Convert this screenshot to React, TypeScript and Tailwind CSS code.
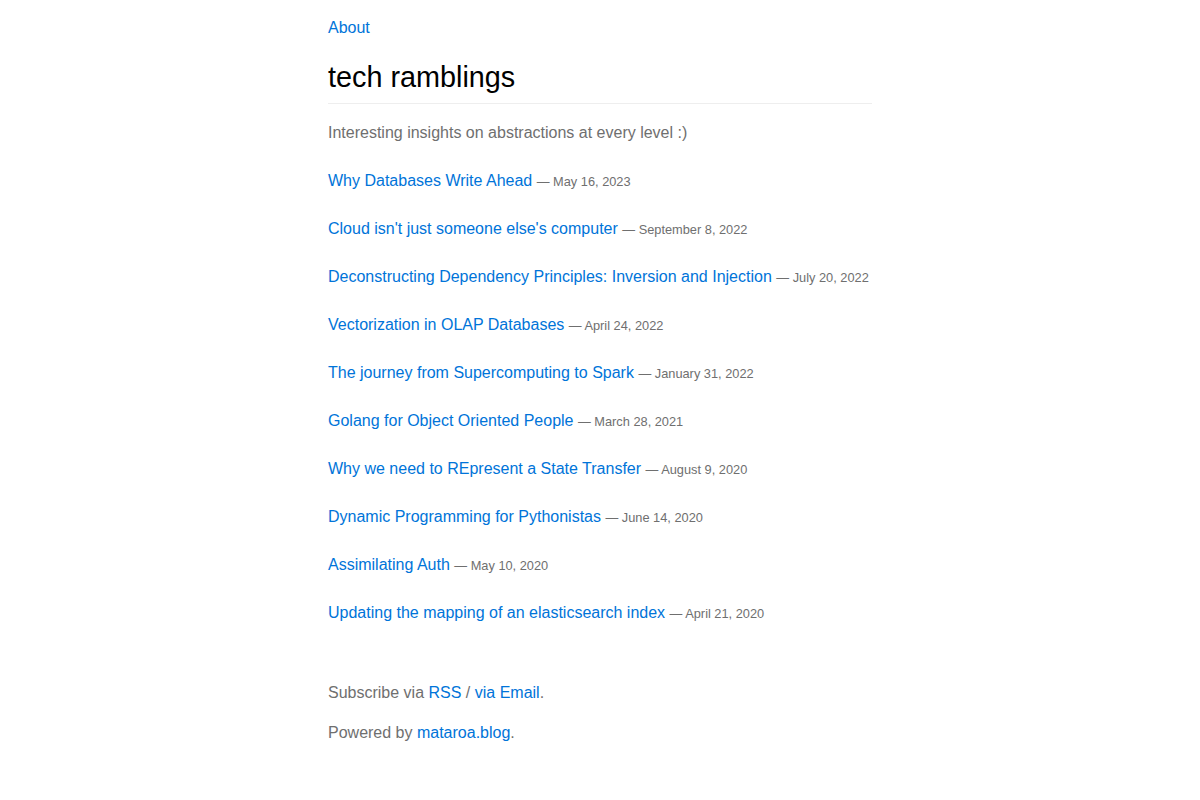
const posts: { title: string; date: string }[] = [
  { title: "Why Databases Write Ahead", date: "May 16, 2023" },
  { title: "Cloud isn't just someone else's computer", date: "September 8, 2022" },
  { title: "Deconstructing Dependency Principles: Inversion and Injection", date: "July 20, 2022" },
  { title: "Vectorization in OLAP Databases", date: "April 24, 2022" },
  { title: "The journey from Supercomputing to Spark", date: "January 31, 2022" },
  { title: "Golang for Object Oriented People", date: "March 28, 2021" },
  { title: "Why we need to REpresent a State Transfer", date: "August 9, 2020" },
  { title: "Dynamic Programming for Pythonistas", date: "June 14, 2020" },
  { title: "Assimilating Auth", date: "May 10, 2020" },
  { title: "Updating the mapping of an elasticsearch index", date: "April 21, 2020" },
];

export default function App() {
  return (
    <div
      className="min-h-[800px] bg-white text-[16px] leading-[24px] text-[#6f6f6f]"
      style={{ fontFamily: '"Liberation Sans", Arial, sans-serif' }}
    >
      <div className="mx-auto w-[544px] pt-[16px]">
        <nav>
          <a href="#" className="text-[#0074d9]">About</a>
        </nav>

        <header className="mt-[20px] border-b border-[#eeeeee] pb-[9px]">
          <h1 className="text-[28.8px] leading-[34px] text-black">tech ramblings</h1>
        </header>

        <p className="mt-[17px]">Interesting insights on abstractions at every level :)</p>

        <ul className="mt-[24px] flex flex-col gap-[24px]">
          {posts.map((p) => (
            <li key={p.title} className="h-[24px] whitespace-nowrap">
              <a href="#" className="text-[#0074d9]">{p.title}</a>{" "}
              <small className="text-[12.8px] leading-none">— {p.date}</small>
            </li>
          ))}
        </ul>

        <footer className="mt-[56px] flex flex-col gap-[16px] pb-[40px]">
          <p>
            Subscribe via <a href="#" className="text-[#0074d9]">RSS</a> /{" "}
            <a href="#" className="text-[#0074d9]">via Email</a>.
          </p>
          <p>
            Powered by <a href="#" className="text-[#0074d9]">mataroa.blog</a>.
          </p>
        </footer>
      </div>
    </div>
  );
}
